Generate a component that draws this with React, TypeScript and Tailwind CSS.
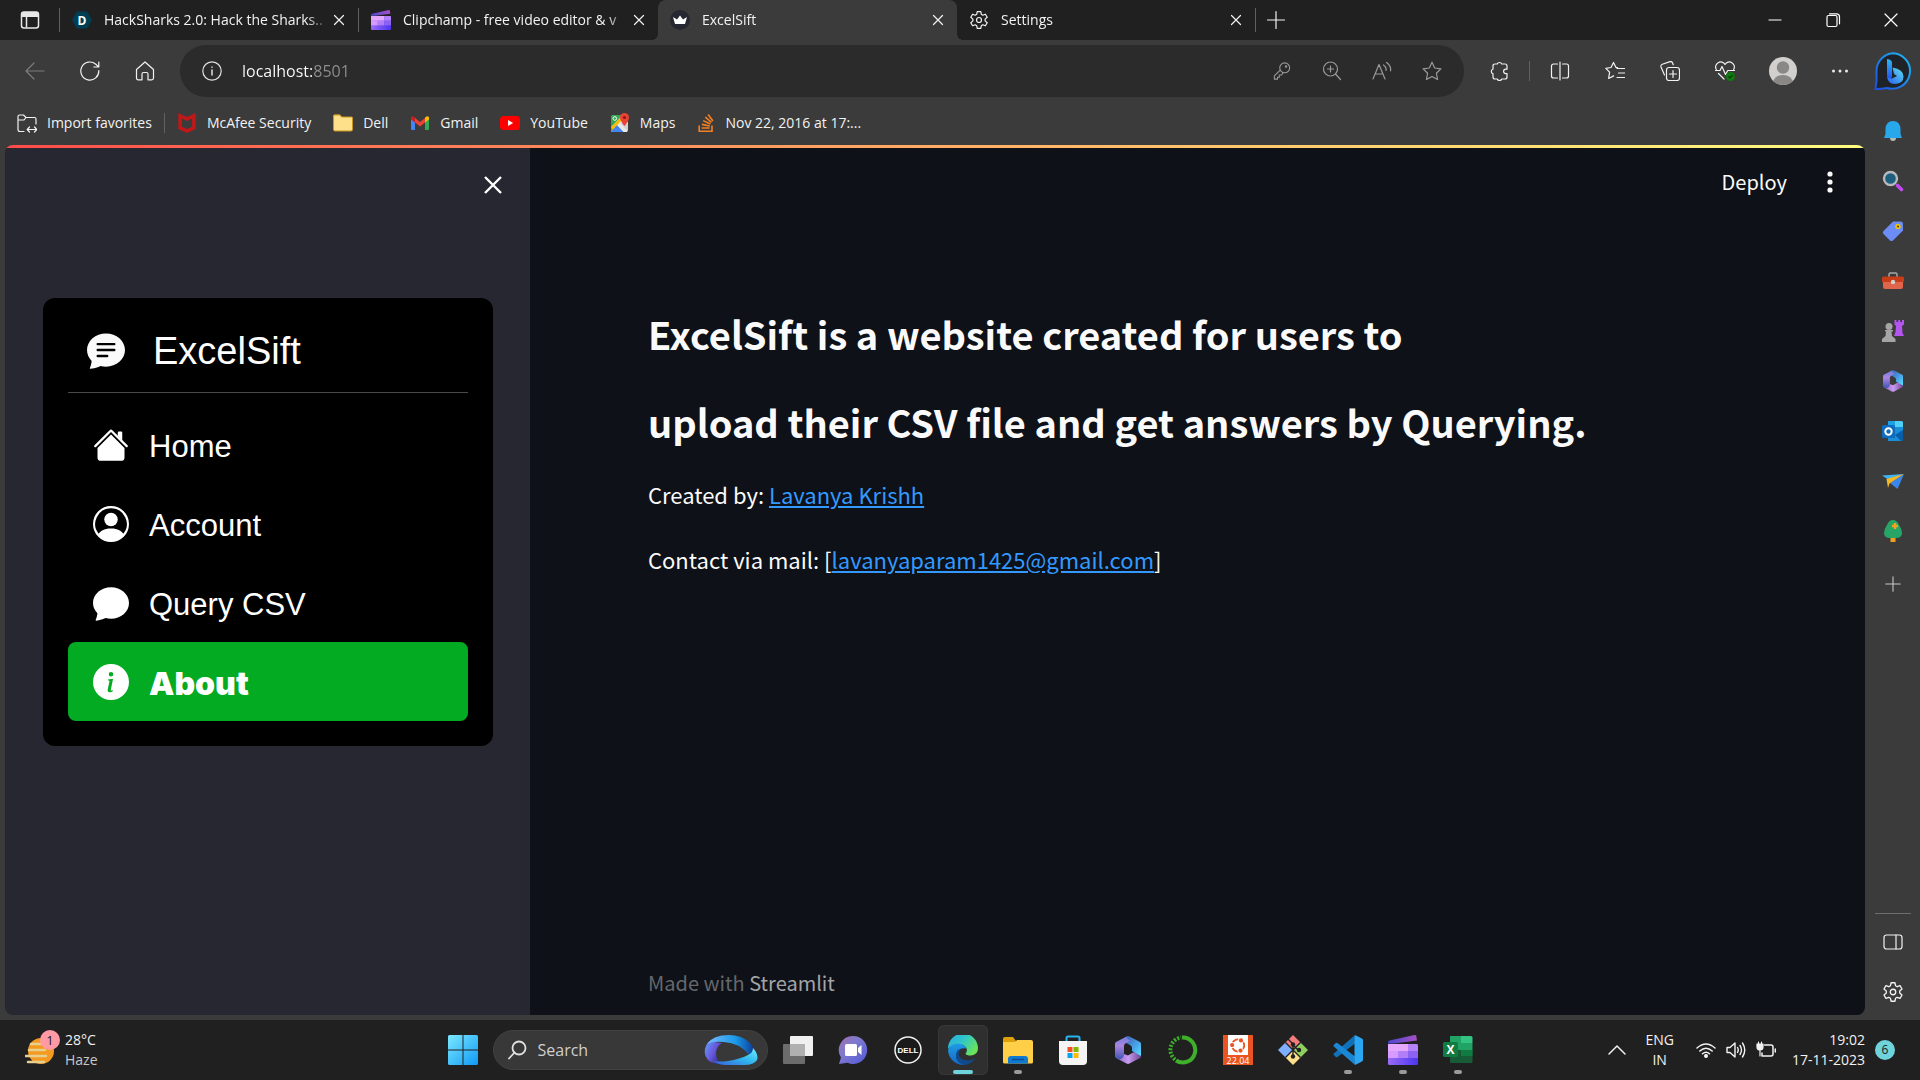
import type { ReactNode } from 'react';
import { clsx } from 'clsx';
import { BsChatTextFill, BsPersonCircle, BsChatFill, BsInfoCircleFill } from 'react-icons/bs';
import { SiMcafee, SiStackoverflow, SiUbuntu } from 'react-icons/si';

// Thin 20x20 outline icon used all over the browser chrome.
function Line({ children, className }: { children: ReactNode; className?: string }) {
  return (
    <svg viewBox="0 0 20 20" fill="none" stroke="currentColor" strokeWidth="1.2" strokeLinecap="round" strokeLinejoin="round" className={clsx('shrink-0', className ?? 'size-5')}>
      {children}
    </svg>
  );
}

const GEAR =
  'M8.2 .7h3.600l.5 2.700 1.500.900 2.600-1 1.800 3.100-2.100 1.800v1.800l2.100 1.800-1.800 3.100-2.600-1-1.500.900-.5 2.700H8.200l-.5-2.700-1.500-.9-2.600 1L1.800 11.800l2.100-1.800V8.200L1.800 6.400l1.800-3.100 2.600 1 1.500-.900z';

function GearIcon({ className }: { className?: string }) {
  return (
    <Line className={className}>
      <g transform="translate(0 .9)">
        <path d={GEAR} />
        <circle cx="10" cy="9.1" r="2.500" />
      </g>
    </Line>
  );
}

function CloseIcon() {
  return (
    <Line className="size-5">
      <path d="M5.500 5.500l9 9M14.500 5.500l-9 9" />
    </Line>
  );
}

function ClipchampIcon({ className }: { className?: string }) {
  return (
    <svg viewBox="0 0 30 30" className={clsx('shrink-0', className)}>
      <defs>
        <linearGradient id="clipTop" x1="0" y1="0" x2="1" y2="0">
          <stop stopColor="#4b48d0" />
          <stop offset="1" stopColor="#a850c4" />
        </linearGradient>
        <linearGradient id="clipBottom" x1="0" y1="0" x2="1" y2="0">
          <stop stopColor="#9a6bf5" />
          <stop offset="1" stopColor="#4c35f0" />
        </linearGradient>
      </defs>
      <path d="M0 7.500Q0 6 1.500 5.600L26.500 0q1.500-.3 1.800 1.200L29 5.500 6 8.500H0z" fill="url(#clipTop)" />
      <path d="M0 9h28.500Q30 9 30 10.500v18q0 1.500-1.500 1.500h-27Q0 30 0 28.500z" fill="url(#clipBottom)" />
      <path d="M0 9h20v7H0z" fill="#e6a8ff" />
      <path d="M20 9h8.500Q30 9 30 10.500V16H20z" fill="#b583f7" />
      <path d="M0 16h10v7H0z" fill="#d79bff" />
      <path d="M10 16h10v7H10z" fill="#b27ff8" />
      <path d="M20 16h10v7H20z" fill="#8c62f2" />
    </svg>
  );
}

function M365Icon({ className }: { className?: string }) {
  return (
    <svg viewBox="0 0 26 28" className={clsx('shrink-0', className)}>
      <defs>
        <linearGradient id="m365Left" x1="0" y1="0" x2="0" y2="1">
          <stop stopColor="#6f7fd8" />
          <stop offset="0.400" stopColor="#ab85e0" />
          <stop offset="1" stopColor="#3f55b0" />
        </linearGradient>
        <linearGradient id="m365Right" x1="0" y1="0" x2="1" y2="1">
          <stop stopColor="#3a5cb0" />
          <stop offset="0.600" stopColor="#4aa5ea" />
          <stop offset="1" stopColor="#5ee0ff" />
        </linearGradient>
        <linearGradient id="m365Bottom" x1="0" y1="0" x2="1" y2="0">
          <stop stopColor="#8d62c8" />
          <stop offset="0.500" stopColor="#c79bf0" />
          <stop offset="1" stopColor="#6d4492" />
        </linearGradient>
      </defs>
      <path d="M26 16v4q0 1.500-1 2l-10.500 5.500q-1.500.800-3 0L1 22q6 1 8-4l4 1.500 5-3z" fill="url(#m365Bottom)" />
      <path d="M11.500.500Q13-.300 14.500.500L25 6q1 .600 1 2v12l-9-5v-3q0-2-2-3L9 6z" fill="url(#m365Right)" />
      <path d="M11.500.500 1 6Q0 6.600 0 8v12q0 1.400 1 2l3 1.500q5-1 5-5.500v-8q0-2 2-3l4-2q-3-2-3.500-4.500z" fill="url(#m365Left)" />
    </svg>
  );
}

function BingIcon() {
  return (
    <svg viewBox="0 0 38 38" className="size-[38px]">
      <defs>
        <linearGradient id="bing" x1="0" y1="1" x2="1" y2="0">
          <stop stopColor="#1a4fe0" />
          <stop offset="1" stopColor="#20b8f0" />
        </linearGradient>
        <linearGradient id="bingB" x1="0" y1="0" x2="0" y2="1">
          <stop stopColor="#2bb8f5" />
          <stop offset="1" stopColor="#2350f0" />
        </linearGradient>
        <linearGradient id="bingBowl" x1="0" y1="1" x2="1" y2="0">
          <stop stopColor="#2560f0" />
          <stop offset="1" stopColor="#5fe0f0" />
        </linearGradient>
      </defs>
      <path d="M19 1.200a17.800 17.800 0 1 1-6 34.800l-3.500.600-8 .600 1-8.500V19A17.800 17.800 0 0 1 19 1.200z" fill="#1f2328" stroke="url(#bing)" strokeWidth="2" />
      <path d="M13 7q5 .500 5 4v14l-2 3q-3-1-3-5z" fill="url(#bingB)" />
      <path d="M13 23q0 4 5 3.500l5-2.500-3-2-1.500-6.500q11 2 11 9 0 7-8.500 7.500-8 0-8-9z" fill="url(#bingBowl)" />
    </svg>
  );
}

const tabs = [
  {
    title: 'HackSharks 2.0: Hack the Sharks..',
    icon: (
      <svg viewBox="0 0 20 20" className="size-5 shrink-0">
        <path d="M5 1.500h10l5 8.500-5 8.500H5L0 10z" fill="#003e54" />
        <text x="10" y="14.500" textAnchor="middle" fontSize="12" fontWeight="700" fill="#fff" fontFamily="Open Sans, sans-serif">D</text>
      </svg>
    ),
  },
  { title: 'Clipchamp - free video editor & v', icon: <ClipchampIcon className="size-5" /> },
  {
    title: 'ExcelSift',
    active: true,
    icon: (
      <svg viewBox="0 0 20 20" className="size-5 shrink-0">
        <circle cx="10" cy="10" r="10" fill="#262730" />
        <path d="M3 7l4 2.500 3-4 3 4L17 7l-2 7H5z" fill="#fff" />
      </svg>
    ),
  },
  { title: 'Settings', icon: <GearIcon /> },
];

function TabStrip() {
  return (
    <div className="flex h-10 shrink-0 items-center bg-[#202020]">
      <button aria-label="Tab actions" className="flex h-10 w-[59px] shrink-0 items-center justify-center">
        <svg viewBox="0 0 20 20" className="size-5">
          <rect x="1.500" y="2" width="17" height="16" rx="2.500" fill="none" stroke="#e8e8e8" strokeWidth="1.500" />
          <path d="M1.500 7V4a2 2 0 0 1 2-2h13a2 2 0 0 1 2 2v3z" fill="#e8e8e8" />
          <path d="M6.500 7v10.500" stroke="#e8e8e8" strokeWidth="1.500" />
        </svg>
      </button>
      <span className="h-6 w-px bg-[#606060]" />
      {tabs.map((tab, i) => (
        <div
          key={tab.title}
          className={clsx(
            'relative flex h-10 w-[299px] items-center',
            tab.active &&
              'rounded-t-lg bg-[#3b3b3b] before:absolute before:bottom-0 before:-left-1.5 before:size-1.5 before:bg-[radial-gradient(circle_at_0_0,transparent_6px,#3b3b3b_6px)] after:absolute after:-right-1.5 after:bottom-0 after:size-1.5 after:bg-[radial-gradient(circle_at_100%_0,transparent_6px,#3b3b3b_6px)]',
          )}
        >
          <button className="flex min-w-0 flex-1 items-center gap-3 pl-3">
            {tab.icon}
            <span className="flex-1 mask-r-from-90% text-left text-sm whitespace-nowrap">{tab.title}</span>
          </button>
          <button aria-label="Close tab" className="mr-[9px] p-0">
            <CloseIcon />
          </button>
          {(i === 0 || i === 3) && <span className="h-6 w-px bg-[#606060]" />}
        </div>
      ))}
      <button aria-label="New tab" className="flex size-10 items-center justify-center">
        <Line>
          <path d="M10 1.500v17M1.500 10h17" />
        </Line>
      </button>
      <div className="ml-auto flex h-10 text-white">
        <button aria-label="Minimize" className="flex w-[58px] items-center justify-center">
          <Line><path d="M4 10h12" /></Line>
        </button>
        <button aria-label="Restore" className="flex w-[58px] items-center justify-center">
          <Line>
            <rect x="4" y="5.500" width="10" height="11" rx="1.500" />
            <path d="M6.500 3.800h7q3 0 3 3v7" />
          </Line>
        </button>
        <button aria-label="Close" className="flex w-[58px] items-center justify-center">
          <Line><path d="M4 4l12 12M16 4L4 16" /></Line>
        </button>
      </div>
    </div>
  );
}

const toolbarButtons = [
  { label: 'Split screen', icon: <path d="M10 1v18M7.500 3H3.500a2 2 0 0 0-2 2v10a2 2 0 0 0 2 2h4M12.500 3h4a2 2 0 0 1 2 2v10a2 2 0 0 1-2 2h-4" /> },
  { label: 'Favorites', icon: <path d="M12.500 6.700 11 6.500 8.500 1.500 6 6.500.800 7.300l3.800 3.900-1 6.300 5-2.600M12 7.500h7.500M13.500 12h6M12 16.500h7.500" /> },
  { label: 'Collections', icon: <><rect x="6.500" y="6.500" width="13" height="13" rx="2.500" /><path d="M13 9.500v7M9.500 13h7M4.500 14 1 6q-.500-2 1.300-2.800L10 .600q1.800-.400 2.500 1.200l.700 2" /></> },
];

function Toolbar() {
  return (
    <div className="flex h-[62px] shrink-0 items-center">
      <nav aria-label="Navigation" className="flex w-[180px] shrink-0 gap-[5px] pl-[10px]">
        <button aria-label="Back" className="flex size-[50px] items-center justify-center text-[#7c7c7c]">
          <Line><path d="M19 10H1M9 2l-8 8 8 8" /></Line>
        </button>
        <button aria-label="Refresh" className="flex size-[50px] items-center justify-center">
          <Line>
            <path d="M18.800 9.500a9 9 0 1 1-3-6.200l2.700 2.500M18.800 1v5h-5" />
          </Line>
        </button>
        <button aria-label="Home" className="flex size-[50px] items-center justify-center">
          <Line>
            <path d="M1.500 8.500 10 1l8.500 7.500V17q0 1.800-1.800 1.800H13V13q0-1.500-1.500-1.500h-3Q7 11.500 7 13v5.800H3.300q-1.800 0-1.800-1.800z" />
          </Line>
        </button>
      </nav>
      <div className="flex h-[52px] flex-1 items-center rounded-full bg-[#2b2b2b] pr-[7px] pl-[22px] text-[#9a9a9a]">
        <button aria-label="Site information" className="text-[#e0e0e0]">
          <Line>
            <circle cx="10" cy="10" r="9.200" />
            <path d="M10 9v5M10 6v.200" strokeWidth="1.500" />
          </Line>
        </button>
        <input
          aria-label="Address"
          defaultValue="localhost:8501"
          className="ml-5 min-w-0 flex-1 bg-[linear-gradient(90deg,#fff_72px,#8f8f8f_72px)] bg-clip-text text-base text-transparent outline-none"
        />
        <button aria-label="Passwords" className="flex w-[50px] justify-center">
          <Line className="size-[18px]">
            <circle cx="13" cy="6.500" r="5.500" />
            <circle cx="14.500" cy="5" r=".800" />
            <path d="M8 9 1.500 15.500v3.500h3.500v-2h2v-2.500h2.500l2-2.800" />
          </Line>
        </button>
        <button aria-label="Zoom" className="flex w-[50px] justify-center">
          <Line>
            <circle cx="8.500" cy="8" r="7" />
            <path d="M13.500 13l5 5.500M8.500 5v6M5.500 8h6" />
          </Line>
        </button>
        <button aria-label="Read aloud" className="flex w-[50px] justify-center">
          <Line>
            <path d="M1 18 7 3.500 13 18M3 13h8M11.500 4q3 2 2.500 5.500M14.500 1.500q5 3.500 4 8.500" />
          </Line>
        </button>
        <button aria-label="Add to favorites" className="flex w-[50px] justify-center">
          <Line>
            <path d="M10 1.200l2.700 5.800 6.200.800-4.500 4.400 1.200 6.300L10 15.400l-5.600 3.100 1.200-6.300L1.100 7.800l6.200-.800z" />
          </Line>
        </button>
      </div>
      <div className="ml-[10px] flex items-center gap-[5px]">
        <button aria-label="Extensions" className="flex size-[50px] items-center justify-center">
          <Line>
            <path d="M6 3h2.200a2.500 2.500 0 0 1 4.600 0H16q2 0 2 2v3.200h-1.200a2.200 2.200 0 0 0 0 4.400H18V16q0 2-2 2h-3.200a2.500 2.500 0 0 1-4.600 0H6q-2 0-2-2v-3.200a2.400 2.400 0 0 1 0-4.600V5q0-2 2-2z" />
          </Line>
        </button>
        <span className="h-5 w-px bg-[#626262]" />
        {toolbarButtons.map(({ label, icon }) => (
          <button key={label} aria-label={label} className="flex size-[50px] items-center justify-center">
            <Line>{icon}</Line>
          </button>
        ))}
        <button aria-label="Browser essentials" className="flex size-[50px] items-center justify-center">
          <Line>
            <path d="M1.300 8.500a4.800 4.800 0 0 1 8.700-5 4.800 4.800 0 0 1 8.700 5M.500 9.500H5l2-4 3.500 8 2.300-4h6.700M3.500 12.500l5.500 5.500" />
            <circle cx="15.500" cy="15.500" r="4.500" fill="#0f7b0f" stroke="none" />
            <path d="M13.700 15.700l1.300 1.200 2.300-2.500" stroke="#0a3d0a" />
          </Line>
        </button>
        <button aria-label="Profile" className="flex h-[50px] w-14 items-center justify-center">
          <svg viewBox="0 0 28 28" className="size-7">
            <clipPath id="avatar"><circle cx="14" cy="14" r="14" /></clipPath>
            <g clipPath="url(#avatar)">
              <path d="M0 0h28v28H0z" fill="#d2d0ce" />
              <circle cx="14" cy="10.500" r="6.200" fill="#8a8886" />
              <ellipse cx="14" cy="26" rx="10" ry="8" fill="#8a8886" />
            </g>
          </svg>
        </button>
        <button aria-label="More" className="flex h-[50px] w-12 items-center justify-center">
          <svg viewBox="0 0 20 20" className="size-5" fill="#e8e8e8">
            <circle cx="3.500" cy="10" r="1.500" /><circle cx="10" cy="10" r="1.500" /><circle cx="16.500" cy="10" r="1.500" />
          </svg>
        </button>
        <button aria-label="Bing" className="flex h-[50px] w-[51px] items-center justify-center pr-1">
          <BingIcon />
        </button>
      </div>
    </div>
  );
}

const bookmarks = [
  { label: 'McAfee Security', icon: <SiMcafee className="size-5 text-[#c01818]" /> },
  {
    label: 'Dell',
    icon: (
      <svg viewBox="0 0 20 20" className="size-5">
        <path d="M0 3q0-1.500 1.500-1.500H7L9 4H0z" fill="#d9a520" />
        <path d="M.500 5V3.500Q.500 2 2 2h4.500L8.500 4h10Q19.500 4 19.500 5v11.500q0 1.500-1.500 1.500H2q-1.500 0-1.500-1.500z" fill="#ffe08a" stroke="#c8961e" />
      </svg>
    ),
  },
  {
    label: 'Gmail',
    icon: (
      <svg viewBox="0 0 20 20" className="size-5">
        <path d="M1 5v11q0 1 1 1h3V9z" fill="#4285f4" />
        <path d="M19 5v11q0 1-1 1h-3V9z" fill="#34a853" />
        <path d="M5 5l5 4 5-4v4.500l-5 4-5-4z" fill="#ea4335" />
        <path d="M1 5q0-2.500 2.500-1.500L5 4.500v5L1 6.500z" fill="#c5221f" />
        <path d="M19 5q0-2.500-2.500-1.500L15 4.500v5l4-3z" fill="#fbbc04" />
      </svg>
    ),
  },
  {
    label: 'YouTube',
    icon: (
      <svg viewBox="0 0 20 20" className="size-5">
        <rect y="3" width="20" height="14" rx="3.500" fill="#f00" />
        <path d="M8 7l5.200 3L8 13z" fill="#fff" />
      </svg>
    ),
  },
  {
    label: 'Maps',
    icon: (
      <svg viewBox="0 0 20 20" className="size-5">
        <path d="M3 2h12l3 8v7l-1 2H2l-1-1V4z" fill="#e8e8e8" />
        <path d="M1 4q0-2 2-2h10L1 14z" fill="#34a853" />
        <path d="M1 14l4-4 8.500 9H3q-2 0-2-2z" fill="#4285f4" />
        <path d="M1 14 10 5l2 2L2.500 17z" fill="#fbbc04" />
        <path d="M10 10l8 8V11z" fill="#cfd2d6" />
        <path d="M14.500 0A4.500 4.500 0 0 1 19 4.500Q19 8 14.500 13 10 8 10 4.500A4.500 4.500 0 0 1 14.500 0z" fill="#ea4335" />
        <circle cx="14.500" cy="4.500" r="1.600" fill="#8c1a11" />
        <circle cx="4.800" cy="5.500" r="1.800" fill="none" stroke="#fff" />
      </svg>
    ),
  },
  { label: 'Nov 22, 2016 at 17:...', icon: <SiStackoverflow className="size-[18px] text-[#f48024]" /> },
];

function BookmarksBar() {
  return (
    <div className="flex h-[43px] shrink-0 items-center pb-0.5 pl-3 text-sm">
      <button className="flex items-center gap-[10px]">
        <Line>
          <path d="M7 18.500H3Q1 18.500 1 16.500V3.500Q1 2 2.500 2h4L9 4.500h8.500q1.500 0 1.500 1.500v5M1 7h6L9 4.500M10.500 16.500h9M12.500 14l-2.300 2.500 2.300 2.500M17.500 14l2.300 2.500-2.300 2.500" />
        </Line>
        Import favorites
      </button>
      <span className="mx-3 h-5 w-px bg-[#626262]" />
      <ul className="flex gap-[22px]">
        {bookmarks.map(({ label, icon }) => (
          <li key={label}>
            <a href="#" className="flex items-center gap-[10px] whitespace-nowrap">
              {icon}
              {label}
            </a>
          </li>
        ))}
      </ul>
    </div>
  );
}

const railItems = [
  {
    label: 'Notifications',
    icon: (
      <svg viewBox="0 0 22 22" className="size-[22px]">
        <path d="M8 18h6q0 3-3 3t-3-3z" fill="#b8b8b8" />
        <path d="M11 1q7 0 7.500 8v5l1.500 4H2l1.500-4V9Q4 1 11 1z" fill="#28a8ea" />
      </svg>
    ),
  },
  {
    label: 'Search',
    icon: (
      <svg viewBox="0 0 22 22" className="size-[22px]">
        <circle cx="8.500" cy="8.500" r="6.500" fill="#1e5f80" stroke="#b9b9b9" strokeWidth="2.400" />
        <path d="M15.500 15.500l4 4" stroke="#c04af0" strokeWidth="3.600" strokeLinecap="round" />
      </svg>
    ),
  },
  {
    label: 'Shopping',
    icon: (
      <svg viewBox="0 0 22 22" className="size-[22px]">
        <path d="M11 1.500h7.500q2.500 0 2.500 2.500v6.500L11 20.500q-1.500 1-3 0L1.500 14q-1.500-1.500 0-3z" fill="#6b8df5" />
        <circle cx="16" cy="6.500" r="2.700" fill="#f2c400" />
        <circle cx="16" cy="6.500" r="1" fill="#333" />
      </svg>
    ),
  },
  {
    label: 'Tools',
    icon: (
      <svg viewBox="0 0 22 22" className="size-[22px]">
        <path d="M7 7V4.500Q7 3 8.500 3h5Q15 3 15 4.500V7" fill="none" stroke="#a8a8a8" strokeWidth="1.500" />
        <path d="M1 11h20v6q0 2-2 2H3q-2 0-2-2z" fill="#e0654a" />
        <path d="M0 8q0-1.500 1.500-1.500h19Q22 6.500 22 8v4H0z" fill="#c63d17" />
        <circle cx="11" cy="12" r="2.200" fill="#d0d0d0" />
      </svg>
    ),
  },
  {
    label: 'Games',
    icon: (
      <svg viewBox="0 0 22 22" className="size-[22px]">
        <path d="M12.500 0h2v2h1.700V0h2v2H20V0h2v4.500l-2 1.500.500 7 1.500 3H12l1.500-4L14 6l-1.500-1.500z" fill="#b455f0" />
        <circle cx="7" cy="6.500" r="3.500" fill="#a5a5a5" />
        <path d="M3 10h8v1.500H9.500L10 16l3.500 3v3H0v-3l3.500-3 .500-4.500H3z" fill="#a5a5a5" />
      </svg>
    ),
  },
  { label: 'Microsoft 365', icon: <M365Icon className="h-[22px] w-5" /> },
  {
    label: 'Outlook',
    icon: (
      <svg viewBox="0 0 22 22" className="size-[22px]">
        <path d="M6 1h13q2 0 2 2v16q0 2-2 2H6z" fill="#1a8fd8" />
        <path d="M6 1h7v6H6z" fill="#1fa0e4" /><path d="M13 1h6q2 0 2 2v4h-8z" fill="#50d0f5" />
        <path d="M13 15l8-5v9q0 2-2 2z" fill="#0a5ea8" />
        <rect x="0" y="5" width="13" height="13" rx="1.500" fill="#0f6cbd" />
        <circle cx="6.500" cy="11.500" r="3.200" fill="none" stroke="#fff" strokeWidth="2" />
      </svg>
    ),
  },
  {
    label: 'Drop',
    icon: (
      <svg viewBox="0 0 22 22" className="size-[22px]">
        <path d="M0 5.500 22 4 7 10z" fill="#3fb4f2" />
        <path d="M22 4 15.500 19 8 13z" fill="#3a86ec" />
        <path d="M4.500 9 22 4 7.500 13.500 6 18z" fill="#f7b720" />
      </svg>
    ),
  },
  {
    label: 'Tree',
    icon: (
      <svg viewBox="0 0 22 22" className="size-[22px]">
        <path d="M8.500 16h5v6h-5z" fill="#f0a020" />
        <path d="M11 0q4 0 6 5 3 4 3 8 0 5-6 5H8q-6 0-6-5 0-4 3-8 2-5 6-5z" fill="#27a567" />
        <path d="M13 3v6M10 6h6" stroke="#f7a01d" strokeWidth="2.400" />
      </svg>
    ),
  },
];

function SideRail() {
  return (
    <aside className="flex w-[55px] shrink-0 flex-col items-center pt-1 pb-[3px]">
      {railItems.map(({ label, icon }) => (
        <button key={label} aria-label={label} className="flex size-[50px] items-center justify-center">
          {icon}
        </button>
      ))}
      <button aria-label="Customize" className="flex h-14 w-[50px] items-center justify-center text-[#c8c8c8]">
        <Line className="size-[18px]"><path d="M10 2v16M2 10h16" /></Line>
      </button>
      <span className="mt-auto mb-[3px] h-px w-9 bg-[#6e6e6e]" />
      <button aria-label="Hide sidebar" className="flex size-[50px] items-center justify-center">
        <Line>
          <rect x="1" y="3" width="18" height="14" rx="2.500" />
          <path d="M13 3v14" />
        </Line>
      </button>
      <button aria-label="Settings" className="flex size-[50px] items-center justify-center">
        <GearIcon className="size-[22px]" />
      </button>
    </aside>
  );
}

function HouseFill({ className }: { className?: string }) {
  return (
    <svg viewBox="0 0 16 16" fill="currentColor" className={className}>
      <path d="m8 3.293 6 6V13.500a1.500 1.500 0 0 1-1.500 1.500h-9A1.500 1.500 0 0 1 2 13.500V9.293l6-6zm5-.793V6l-2-2V2.500a.5.5 0 0 1 .5-.5h1a.5.5 0 0 1 .5.5z" />
      <path d="M7.293 1.500a1 1 0 0 1 1.414 0l6.647 6.646a.5.5 0 0 1-.708.708L8 2.207 1.354 8.854a.5.5 0 1 1-.708-.708L7.293 1.500z" />
    </svg>
  );
}

const menu = [
  { label: 'Home', icon: HouseFill },
  { label: 'Account', icon: BsPersonCircle },
  { label: 'Query CSV', icon: BsChatFill },
  { label: 'About', icon: BsInfoCircleFill, active: true },
];

function AppSidebar() {
  return (
    <aside className="w-[525px] shrink-0 bg-[#262730] pt-[13px] pr-[37px] pl-[38px]">
      <div className="-mr-6 flex justify-end">
        <button aria-label="Close sidebar" className="flex size-12 items-center justify-center text-white">
          <svg viewBox="0 0 20 20" className="size-5" stroke="currentColor" strokeWidth="2.400">
            <path d="M2 2l16 16M18 2L2 18" />
          </svg>
        </button>
      </div>
      <nav className="mt-[89px] rounded-xl bg-black p-[25px] font-['Liberation_Sans',Arial,sans-serif] text-white">
        <div className="flex h-[70px] items-start gap-7 border-b border-[#4a4a4a] pt-1 pl-[19px]">
          <BsChatTextFill className="mt-1 size-[38px] text-[#fafafa]" />
          <span className="text-[38px] leading-12">ExcelSift</span>
        </div>
        <ul className="pt-3">
          {menu.map(({ label, icon: Icon, active }) => (
            <li key={label}>
              <a href="#" className={clsx('flex h-[79px] items-center gap-5 rounded-lg pl-[25px]', active && 'bg-[#02ab21]')}>
                <Icon className="size-9" />
                <span className={clsx('pt-1', active ? "font-['Inter',sans-serif] text-[32px] leading-10 font-black" : 'text-[31px] leading-10')}>{label}</span>
              </a>
            </li>
          ))}
        </ul>
      </nav>
    </aside>
  );
}

function AppMain() {
  return (
    <main className="flex flex-1 flex-col bg-[#0e1117] pl-[118px] font-['Noto_Sans_CJK_SC',sans-serif] text-[#fafafa]">
      <header className="flex items-center justify-end gap-[33px] pt-3 pr-[25px]">
        <button className="text-[20px] leading-11">Deploy</button>
        <button aria-label="Menu" className="flex h-11 w-5 items-center justify-center">
          <svg viewBox="0 0 20 24" className="h-6 w-5" fill="currentColor">
            <circle cx="10" cy="4" r="2.600" /><circle cx="10" cy="12" r="2.600" /><circle cx="10" cy="20" r="2.600" />
          </svg>
        </button>
      </header>
      <h1 className="mt-[86px] text-[38px] leading-[88px] font-bold">
        ExcelSift is a website created for users to
        <br />
        upload their CSV file and get answers by Querying.
      </h1>
      <p className="mt-2 text-[22px] leading-[40px]">
        Created by: <a href="#" className="text-[#3399ff] underline">Lavanya Krishh</a>
      </p>
      <p className="mt-[25px] text-[22px] leading-[40px]">
        Contact via mail: [<a href="#" className="text-[#3399ff] underline">lavanyaparam1425@gmail.com</a>]
      </p>
      <footer className="mt-auto pb-3 text-[20px] leading-10 text-[#65676c]">
        Made with <a href="#" className="text-[#a3a4a8]">Streamlit</a>
      </footer>
    </main>
  );
}

function EdgeIcon() {
  return (
    <svg viewBox="0 0 30 30" className="size-[30px]">
      <defs>
        <linearGradient id="edgeTop" x1="0" y1="0" x2="1" y2="0.600">
          <stop stopColor="#2aa7e0" />
          <stop offset="0.500" stopColor="#2fc6c9" />
          <stop offset="1" stopColor="#6be35a" />
        </linearGradient>
        <linearGradient id="edgeLeft" x1="0" y1="0" x2="0" y2="1">
          <stop stopColor="#1f9be6" />
          <stop offset="1" stopColor="#1668c4" />
        </linearGradient>
      </defs>
      <path d="M0 14A15 15 0 0 1 30 13q0 7-7 7.500-5 0-5.500-2 2.500-3 .500-6-3-4-8-3.500-6 .500-10 5z" fill="url(#edgeTop)" />
      <path d="M0 15q3-6.500 10-6.500 7 .500 8 5-7-1-8 5-.500 8 8 11A15 15 0 0 1 0 15z" fill="url(#edgeLeft)" />
      <path d="M10.500 17q0 8 9 8.500 4 0 8-2.500-4 6.500-12 7Q7 27 8 19q.500-4 5-6-2.500 2-2.500 4z" fill="#114a8b" />
    </svg>
  );
}

const taskbarApps = [
  {
    label: 'Task view',
    icon: (
      <svg viewBox="0 0 30 30" className="size-[30px]">
        <rect x="7" y="1" width="23" height="20" rx="1" fill="#f0f0f0" />
        <rect x="0" y="9" width="22" height="20" rx="1" fill="#6c6c6c" />
        <path d="M7 9h15v12H7z" fill="#b0b0b0" />
      </svg>
    ),
  },
  {
    label: 'Chat',
    icon: (
      <svg viewBox="0 0 30 30" className="size-[30px]">
        <defs>
          <linearGradient id="chat" x1="0" y1="0" x2="1" y2="1">
            <stop stopColor="#a070a8" />
            <stop offset="0.400" stopColor="#7f7ad0" />
            <stop offset="1" stopColor="#5058d8" />
          </linearGradient>
        </defs>
        <path d="M15 1a14 14 0 1 1-5.500 26.800L1 29l2-6.500A14 14 0 0 1 15 1z" fill="url(#chat)" />
        <rect x="7" y="9" width="12" height="12" rx="1.500" fill="#fff" />
        <path d="M20 13l3.500-3v10L20 17z" fill="#fff" />
      </svg>
    ),
  },
  {
    label: 'Dell',
    icon: (
      <svg viewBox="0 0 30 30" className="size-[30px]">
        <circle cx="15" cy="15" r="13" fill="#1a1a1a" stroke="#f0f0f0" strokeWidth="1.500" />
        <text x="15" y="18" textAnchor="middle" fontSize="8" fontWeight="700" fill="#fff" fontFamily="Liberation Sans, sans-serif">DELL</text>
      </svg>
    ),
  },
  { label: 'Edge', icon: <EdgeIcon />, active: true },
  {
    label: 'File Explorer',
    running: true,
    icon: (
      <svg viewBox="0 0 30 30" className="size-[30px]">
        <path d="M0 4q0-2 2-2h8l3 4v5H0z" fill="#e0a008" />
        <path d="M0 7h12l2-2h14q2 0 2 2v20q0 1.500-1.500 1.500h-27Q0 28.500 0 27z" fill="#ffcf48" />
        <path d="M5 28.500V24q0-3 3-3h14q3 0 3 3v4.500z" fill="#0f7ad0" />
        <path d="M9 24.500h12" stroke="#0a4f94" strokeWidth="1.500" />
      </svg>
    ),
  },
  {
    label: 'Store',
    icon: (
      <svg viewBox="0 0 30 30" className="size-[30px]">
        <path d="M8.500 7V3q0-1.500 1.500-1.500h10q1.500 0 1.500 1.500v4" fill="none" stroke="#28b4f0" strokeWidth="2" />
        <path d="M1 6h28v20q0 4-4 4H5q-4 0-4-4z" fill="#f4f4f4" />
        <path d="M9.500 12h5v5h-5z" fill="#f25022" /><path d="M15.500 12h5v5h-5z" fill="#7fba00" />
        <path d="M9.500 18h5v5h-5z" fill="#00a4ef" /><path d="M15.500 18h5v5h-5z" fill="#ffb900" />
      </svg>
    ),
  },
  { label: 'Microsoft 365', icon: <M365Icon className="h-7 w-[26px]" /> },
  {
    label: 'Anaconda',
    icon: (
      <svg viewBox="0 0 30 30" className="size-[30px]" fill="none" stroke="#3eb02a">
        <path d="M14 2.500A12.500 12.500 0 1 1 8 25.500" strokeWidth="4" />
        <path d="M7 24.500A12.500 12.500 0 0 1 13 2.500" strokeWidth="4" strokeDasharray="2 1.500" />
      </svg>
    ),
  },
  {
    label: 'Ubuntu',
    icon: (
      <svg viewBox="0 0 30 30" className="size-[30px] overflow-visible">
        <path d="M0 0h30v30H0z" fill="#e95420" />
        <path d="M5 0h20v20H5z" fill="#fff" />
        <g transform="translate(7 3)"><SiUbuntu size={15} color="#e95420" /></g>
        <text x="15" y="29" textAnchor="middle" fontSize="9" fill="#fff" fontFamily="Open Sans, sans-serif">22.04</text>
      </svg>
    ),
  },
  {
    label: 'Git',
    icon: (
      <svg viewBox="0 0 30 30" className="size-[30px]">
        <path d="M15 0l7.500 7.500L15 15 7.500 7.500z" fill="#f47c7c" /><path d="M22.500 7.500 30 15l-7.500 7.500L15 15z" fill="#8fd05f" />
        <path d="M15 15l7.500 7.500L15 30l-7.500-7.500z" fill="#ffe08a" /><path d="M7.500 7.500 15 15l-7.500 7.500L0 15z" fill="#7fb0ff" />
        <path d="M7.500 7.500l15 15M22.500 7.500l-15 15M10 4l5 5v13M15 10l6 6" stroke="#222" strokeWidth="1.400" fill="none" />
        <circle cx="15" cy="9.500" r="2.200" fill="#222" /><circle cx="15" cy="21.500" r="2.200" fill="#222" /><circle cx="21" cy="15" r="2.200" fill="#222" />
      </svg>
    ),
  },
  {
    label: 'Visual Studio Code',
    running: true,
    icon: (
      <svg viewBox="0 0 30 30" className="size-[30px]">
        <path d="M21.500.500.800 18.500q-.800.800 0 1.600L2.800 22q.800.700 1.700 0L22 8.500z" fill="#0f72b8" />
        <path d="M21.500 29.500.800 11.500q-.800-.800 0-1.600L2.800 8q.800-.700 1.700 0L22 21.500z" fill="#1a86d4" />
        <path d="M21.500.500Q22 0 23 .500L28.500 3.200q1.500.700 1.500 2v19.600q0 1.300-1.500 2L23 29.500q-1 .500-1.500 0z" fill="#2aa6f2" />
      </svg>
    ),
  },
  { label: 'Clipchamp', running: true, icon: <ClipchampIcon className="size-[30px]" /> },
  {
    label: 'Excel',
    running: true,
    icon: (
      <svg viewBox="0 0 30 30" className="size-[30px]">
        <path d="M7 1h11v14H7z" fill="#21a366" /><path d="M18 1h10q1.500 0 1.500 1.500V8H18z" fill="#33c481" />
        <path d="M18 8h11.500v7H18z" fill="#21a366" /><path d="M7 15h22.500v11.500Q29.500 28 28 28H8.500Q7 28 7 26.500z" fill="#185c37" />
        <path d="M18 15h11.500v6H18z" fill="#107c41" />
        <rect x="0" y="7" width="15" height="15" rx="1.500" fill="#107c41" />
        <text x="7.500" y="19" textAnchor="middle" fontSize="12" fontWeight="700" fill="#fff" fontFamily="Open Sans, sans-serif">X</text>
      </svg>
    ),
  },
];

function Taskbar() {
  return (
    <footer className="flex h-[60px] shrink-0 items-center bg-[#202020] px-[25px] text-sm leading-5">
      <div className="flex flex-1">
        <button className="flex items-center gap-[5px] text-left">
          <svg viewBox="0 0 35 40" className="h-10 w-[35px]">
            <circle cx="16" cy="21" r="13" fill="#f39a1f" />
            <path d="M6 14h12M4 20h16M1 26h20M3 32h16" stroke="#e6cf8f" strokeWidth="2.600" strokeLinecap="round" />
            <circle cx="25" cy="10" r="10" fill="#ff99a4" />
            <text x="25" y="15" textAnchor="middle" fontSize="13" fill="#1a1a1a" fontFamily="Open Sans, sans-serif">1</text>
          </svg>
          <span>
            28°C
            <br />
            <span className="text-[#c8c8c8]">Haze</span>
          </span>
        </button>
      </div>
      <div className="flex items-center gap-[5px]">
        <button aria-label="Start" className="flex size-[50px] items-center justify-center">
          <svg viewBox="0 0 30 30" className="size-[30px]">
            <defs>
              <linearGradient id="win" x1="0" y1="0" x2="1" y2="1">
                <stop stopColor="#7ce8ff" />
                <stop offset="1" stopColor="#0f9af5" />
              </linearGradient>
            </defs>
            <path d="M1.500 0h13v14.500H0V1.500Q0 0 1.500 0zM15.500 0h13Q30 0 30 1.500v13H15.500zM0 15.500h14.500V30h-13Q0 30 0 28.500zM15.500 15.500H30v13q0 1.500-1.500 1.500h-13z" fill="url(#win)" />
          </svg>
        </button>
        <label className="flex h-10 w-[275px] items-center rounded-full border border-[#414141] bg-[#383838] pr-[9px] pl-[13px]">
          <Line className="size-5 text-[#e0e0e0]">
            <circle cx="12" cy="8" r="6.500" strokeWidth="1.800" />
            <path d="M7.500 12.500 2 18.500" strokeWidth="1.800" />
          </Line>
          <input aria-label="Search" placeholder="Search" className="ml-[11px] min-w-0 flex-1 text-base outline-none placeholder:text-[#cfcfcf]" />
          <svg viewBox="0 0 54 30" className="h-[30px] w-[54px]">
            <defs>
              <linearGradient id="ringLeft" x1="0" y1="0" x2="1" y2="0.600">
                <stop stopColor="#5fa0f5" />
                <stop offset="0.500" stopColor="#6a5ae0" />
                <stop offset="1" stopColor="#2a2a80" />
              </linearGradient>
              <linearGradient id="ringTop" x1="0" y1="0" x2="1" y2="0">
                <stop stopColor="#7ab8ff" />
                <stop offset="0.600" stopColor="#1b9be8" />
                <stop offset="1" stopColor="#0c3c98" />
              </linearGradient>
              <linearGradient id="ringBottom" x1="0" y1="1" x2="1" y2="0">
                <stop stopColor="#3a60d8" />
                <stop offset="0.500" stopColor="#2fb4ee" />
                <stop offset="1" stopColor="#6ff0ff" />
              </linearGradient>
            </defs>
            <path d="M5 6.500Q-1 13 1.500 21 5 30 20 29.500q-8-3-8-11 0-7 6-10.500z" fill="url(#ringLeft)" />
            <path d="M3 9Q9 0 25 0q12 0 20 7 5 5 5 10-1 2-5 3Q36 8 20 7 9 6 3 9z" fill="url(#ringTop)" />
            <path d="M44 20q5-2 5-7 6 7 4 12-3 5-13 5H22q-8 0-12-4 7 1 14 0 12-2 20-6z" fill="url(#ringBottom)" />
          </svg>
        </label>
        {taskbarApps.map(({ label, icon, active, running }) => (
          <button
            key={label}
            aria-label={label}
            className={clsx(
              'relative flex size-[50px] items-center justify-center rounded-md',
              active && 'bg-[#2f2f2f] ring-1 ring-[#383838] ring-inset',
            )}
          >
            {icon}
            {active && <span className="absolute bottom-px h-1 w-5 rounded-full bg-[#6fd3dc]" />}
            {running && <span className="absolute bottom-px h-1 w-2 rounded-full bg-[#9a9a9a]" />}
          </button>
        ))}
      </div>
      <div className="flex flex-1 items-center justify-end">
        <button aria-label="Hidden icons" className="mr-[18px]">
          <Line><path d="M2 14l8-8 8 8" strokeWidth="1.500" /></Line>
        </button>
        <button className="text-center">
          ENG
          <br />
          IN
        </button>
        <button aria-label="Quick settings" className="ml-[22px] flex gap-[10px]">
          <Line>
            <path d="M1 8q9-8 18 0M3.800 11q6.200-5.500 12.400 0M6.500 13.800q3.500-3 7 0" strokeWidth="1.500" />
            <circle cx="10" cy="16" r="1.400" fill="currentColor" />
          </Line>
          <Line>
            <path d="M1 7.500h3L9 3v14l-5-4.500H1zM11.500 7.500q1.500 2.500 0 5M14 5.500q3 4.500 0 9M16.500 3q4.500 7 0 14" strokeWidth="1.400" />
          </Line>
          <Line>
            <path d="M8.500 5H15q2 0 2 2v7q0 2-2 2H6v-3M19.300 9v3" strokeWidth="1.500" />
            <path d="M1 4h6v3q0 3-3 3T1 7zM2.500 4V2M5.500 4V2M4 10v6" fill="currentColor" />
          </Line>
        </button>
        <button className="ml-4 text-right">
          19:02
          <br />
          17-11-2023
        </button>
        <button aria-label="6 notifications" className="ml-[10px] flex size-5 items-center justify-center rounded-full bg-[#6fd3dc] text-xs text-[#1a1a1a]">
          6
        </button>
      </div>
    </footer>
  );
}

export default function App() {
  return (
    <div className="flex h-screen flex-col overflow-hidden bg-[#3b3b3b] font-['Open_Sans','Noto_Sans',sans-serif] text-[#f2f2f2]">
      <TabStrip />
      <Toolbar />
      <div className="flex min-h-0 flex-1">
        <div className="flex min-w-0 flex-1 flex-col pb-[5px] pl-[5px]">
          <BookmarksBar />
          <div className="flex min-h-0 flex-1 flex-col overflow-hidden rounded-lg">
            <div className="h-[3px] shrink-0 bg-linear-to-r from-[#ff4b4b] to-[#fffd80]" />
            <div className="flex min-h-0 flex-1">
              <AppSidebar />
              <AppMain />
            </div>
          </div>
        </div>
        <SideRail />
      </div>
      <Taskbar />
    </div>
  );
}
